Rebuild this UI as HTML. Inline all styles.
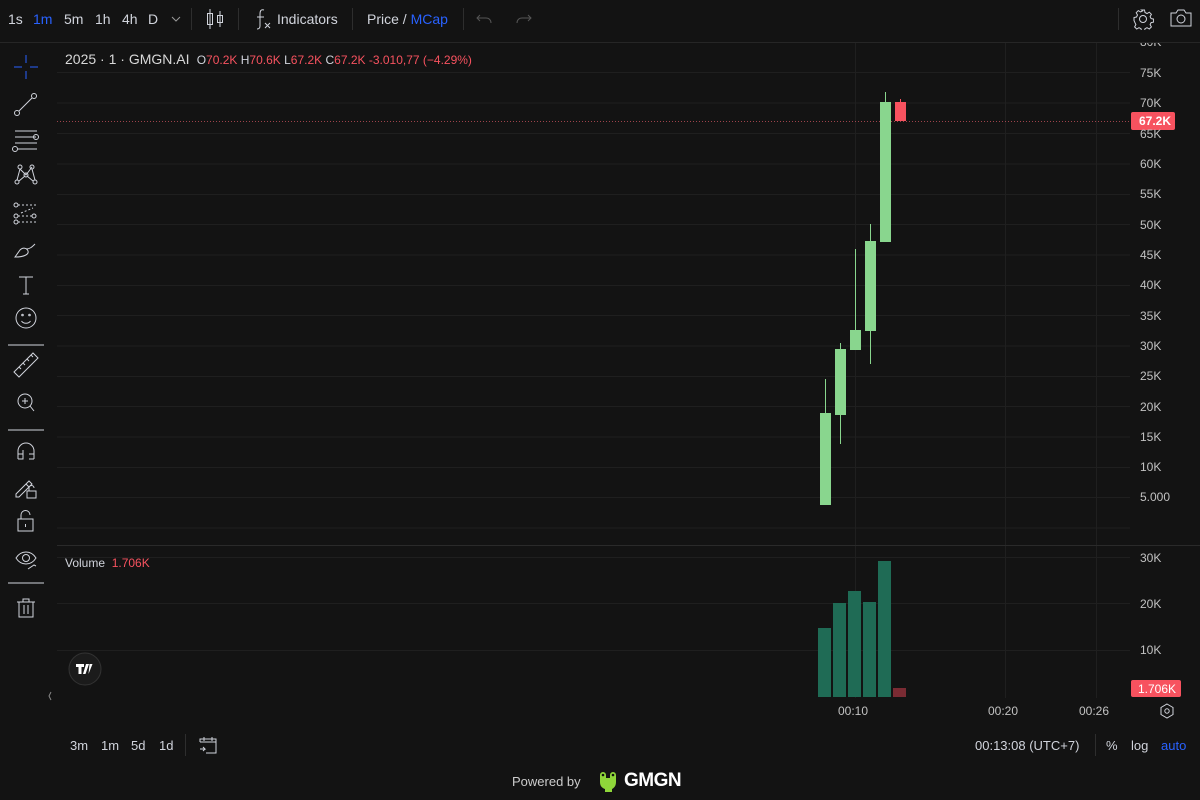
<!DOCTYPE html>
<html><head><meta charset="utf-8"><style>
*{margin:0;padding:0;box-sizing:border-box}
body{width:1200px;height:800px;background:#131313;font-family:"Liberation Sans",sans-serif;color:#d1d4dc;position:relative;overflow:hidden}
.t{position:absolute;font-size:13px;white-space:nowrap}
.sep{position:absolute;background:#2e2e2e}
svg{position:absolute}
</style></head><body>
<!-- top bar -->
<div class="t" style="left:8px;top:11px;font-size:14px">1s</div>
<div class="t" style="left:33px;top:11px;color:#2962ff;font-size:14px">1m</div>
<div class="t" style="left:64px;top:11px;font-size:14px">5m</div>
<div class="t" style="left:95px;top:11px;font-size:14px">1h</div>
<div class="t" style="left:122px;top:11px;font-size:14px">4h</div>
<div class="t" style="left:148px;top:11px;font-size:14px">D</div>
<svg style="left:170px;top:14px" width="12" height="10"><path d="M2 3l4 4 4-4" stroke="#999" fill="none"/></svg>
<div class="sep" style="left:191px;top:8px;width:1px;height:22px"></div>
<svg style="left:205px;top:8px" width="20" height="22" stroke="#d1d4dc" fill="none"><path d="M5 1v20M15 3v16"/><rect x="2.5" y="5.5" width="5" height="11"/><rect x="12.5" y="7.5" width="5" height="7"/></svg>
<div class="sep" style="left:238px;top:8px;width:1px;height:22px"></div>
<svg style="left:253px;top:7px" width="20" height="24" stroke="#d1d4dc" fill="none"><path d="M11 3c-3-1-4 1-4 4v12c0 2-1 3-3 3M4 10h7M12 16l5 5M17 16l-5 5"/></svg>
<div class="t" style="left:277px;top:11px;font-size:14px">Indicators</div>
<div class="sep" style="left:352px;top:8px;width:1px;height:22px"></div>
<div class="t" style="left:367px;top:11px;font-size:14px">Price / <span style="color:#2962ff">MCap</span></div>
<div class="sep" style="left:463px;top:8px;width:1px;height:22px"></div>
<svg style="left:476px;top:11px" width="60" height="16" stroke="#555" fill="none"><path d="M4 4l-3 3 3 3M1 7h9c3 0 5 2 5 5"/><path d="M52 4l3 3-3 3M55 7h-9c-3 0-5 2-5 5"/></svg>
<div class="sep" style="left:1118px;top:8px;width:1px;height:22px"></div>
<svg style="left:1132px;top:8px" width="22" height="22" stroke="#d1d4dc" fill="none"><circle cx="11" cy="11" r="3.5"/><path d="M9.5 2h3l.5 2.5 2 1 2.3-1.3 2.1 2.1-1.3 2.3 1 2 2.5.5v3l-2.5.5-1 2 1.3 2.3-2.1 2.1-2.3-1.3-2 1-.5 2.5h-3l-.5-2.5-2-1-2.3 1.3-2.1-2.1 1.3-2.3-1-2L2 12.5v-3l2.5-.5 1-2-1.3-2.3 2.1-2.1 2.3 1.3 2-1z"/></svg>
<svg style="left:1169px;top:8px" width="24" height="20" stroke="#d1d4dc" fill="none"><path d="M2 5h5l2-3h6l2 3h5v13H2z"/><circle cx="12" cy="11" r="4"/></svg>
<div class="sep" style="left:0;top:42px;width:1200px;height:1px;background:#262626"></div>
<!-- left toolbar -->
<svg style="left:0;top:43px" width="56" height="580" stroke="#d1d4dc" fill="none" stroke-width="1">
<path d="M26 12v8M26 28v8M14 24h8M30 24h8" stroke="#2962ff"/>
<circle cx="17" cy="70" r="2.5"/><circle cx="34" cy="53" r="2.5"/><path d="M19 68l13-13"/>
<path d="M15 88h22M15 94h21M15 100h22M18 106h19"/><circle cx="36" cy="94" r="2.5"/><circle cx="15" cy="106" r="2.5"/>
<circle cx="20" cy="124" r="2"/><circle cx="32" cy="124" r="2"/><circle cx="17" cy="139" r="2"/><circle cx="35" cy="139" r="2"/><circle cx="26" cy="132" r="2"/><path d="M20 126l6 6 6-8M17 137l3-11M35 137l-3-11M19 138l6-5M33 138l-6-5"/>
<circle cx="16" cy="162" r="2"/><circle cx="16" cy="173" r="2"/><circle cx="16" cy="179" r="2"/><circle cx="34" cy="173" r="2"/><path d="M18 162h18M18 173h14M18 179h18M21 170l12-5" stroke-dasharray="2 2"/>
<path d="M15 214l5-7c3-3 7-2 8 1s-3 6-13 6zM26 206c4 0 6-2 9-5"/>
<path d="M19 234h14M26 234v17M23 251h6"/>
<circle cx="26" cy="275" r="10"/><circle cx="22.5" cy="272" r=".8"/><circle cx="29.5" cy="272" r=".8"/><path d="M21.5 278c2 3 7 3 9 0"/>
<path d="M8 302h36"/>
<path d="M14 329l19-19 5 5-19 19zM19 324l2 2M23 320l2 2M27 316l2 2M31 312l2 2"/>
<circle cx="25" cy="358" r="7"/><path d="M30 363l4 5M22 358h6M25 355v6"/>
<path d="M8 387h36"/>
<path d="M18 416v-8a8 8 0 0 1 16 0v8M18 411h5M29 411h5M18 416h5v-9M29 416h5"/>
<path d="M16 451l13-13 3 3-13 13h-3zM26 441l3 3"/><rect x="27" y="448" width="9" height="7"/><path d="M29 448v-3a2.5 2.5 0 0 1 5 0"/>
<rect x="18" y="476" width="15" height="12"/><path d="M21 476v-4a4.5 4.5 0 0 1 9 0"/><path d="M25.5 481v3"/>
<path d="M16 515c5-8 15-8 20 0-5 8-15 8-20 0z"/><circle cx="26" cy="515" r="3.5"/><path d="M28 526l6-4 2 1"/>
<path d="M8 540h36"/>
<path d="M17 559h18M23 559v-3h6v3M19 559v15h14v-15M24 562v9M28 562v9"/>
</svg>
<!-- chart -->
<svg style="left:0;top:0" width="1200" height="800">
<g stroke="#1f1f1f" stroke-width="1">
<path d="M57 72.5H1130M57 103H1130M57 133.5H1130M57 164H1130M57 194.5H1130M57 224.5H1130M57 255H1130M57 285.5H1130M57 315.5H1130M57 346H1130M57 376.5H1130M57 406.5H1130M57 437H1130M57 467.5H1130M57 497.5H1130M57 528H1130"/>
<path d="M855.5 43V698M1005.5 43V698M1096.5 43V698"/>
<path d="M57 557.5H1130M57 603.5H1130M57 650.5H1130"/>
</g>
<path d="M57 545.5H1200" stroke="#2a2a2a"/>
<path d="M57 121.5H1130" stroke="#c0505a" stroke-dasharray="1 2" opacity=".8"/>
<g fill="#89d68e" stroke="#89d68e">
<path d="M825.5 379V413M840.5 343V349M840.5 415V444M855.5 249V330M870.5 224V241M870.5 331V364M885.5 92V102" fill="none"/>
<rect x="820" y="413" width="11" height="92" stroke="none"/>
<rect x="835" y="349" width="11" height="66" stroke="none"/>
<rect x="850" y="330" width="11" height="20" stroke="none"/>
<rect x="865" y="241" width="11" height="90" stroke="none"/>
<rect x="880" y="102" width="11" height="140" stroke="none"/>
</g>
<path d="M900.5 99V102" stroke="#f7525f"/>
<rect x="895" y="102" width="11" height="19" fill="#f7525f"/>
<g fill="#1f6b55">
<rect x="818" y="628" width="13" height="69"/><rect x="833" y="603" width="13" height="94"/><rect x="848" y="591" width="13" height="106"/><rect x="863" y="602" width="13" height="95"/><rect x="878" y="561" width="13" height="136"/>
</g>
<rect x="893" y="688" width="13" height="9" fill="#7a2b33"/>
<rect x="1131" y="112" width="44" height="18" fill="#f7525f" rx="2"/>
<rect x="1131" y="680" width="50" height="17" fill="#f7525f" rx="2"/>
<g font-family="Liberation Sans" font-size="12" fill="#c2c2c2">
<text x="1140" y="46">80K</text><text x="1140" y="77">75K</text><text x="1140" y="107">70K</text><text x="1140" y="138">65K</text><text x="1140" y="168">60K</text><text x="1140" y="198">55K</text><text x="1140" y="229">50K</text><text x="1140" y="259">45K</text><text x="1140" y="289">40K</text><text x="1140" y="320">35K</text><text x="1140" y="350">30K</text><text x="1140" y="380">25K</text><text x="1140" y="411">20K</text><text x="1140" y="441">15K</text><text x="1140" y="471">10K</text><text x="1140" y="501">5.000</text>
<text x="1140" y="562">30K</text><text x="1140" y="608">20K</text><text x="1140" y="654">10K</text>
<text x="838" y="715">00:10</text><text x="988" y="715">00:20</text><text x="1079" y="715">00:26</text>
</g>
<rect x="1131" y="36" width="69" height="7" fill="#131313"/>
<path d="M1131 42.5H1200" stroke="#262626"/>
<text x="1139" y="125" font-family="Liberation Sans" font-size="12" font-weight="bold" fill="#fff">67.2K</text>
<text x="1138" y="693" font-family="Liberation Sans" font-size="12" fill="#fff">1.706K</text>
<g stroke="#d1d4dc" fill="none"><path d="M1167 704l6 3.5v7l-6 3.5-6-3.5v-7z"/><circle cx="1167" cy="711" r="2.2"/></g>
<circle cx="85" cy="669" r="16" fill="#1b1b1b" stroke="#333"/>
<path d="M76 664h8v3h-2.5v7h-3v-7H76zM86 664h3l-3.5 10h-2.5z M89.5 664h3l-4 10" fill="#fff"/>
<path d="M51 692l-2 4 2 4" stroke="#888" fill="none"/>
</svg>
<div class="t" style="left:65px;top:51px;font-size:14px;color:#d8d8d8">2025 · 1 · GMGN.AI <span style="font-size:12px;color:#d1d4dc">&nbsp;O<span style="color:#f7525f">70.2K</span> H<span style="color:#f7525f">70.6K</span> L<span style="color:#f7525f">67.2K</span> C<span style="color:#f7525f">67.2K</span> <span style="color:#f7525f">-3.010,77 (−4.29%)</span></span></div>
<div class="t" style="left:65px;top:556px;font-size:12px">Volume <span style="color:#f7525f">&nbsp;1.706K</span></div>
<!-- bottom bar -->
<div class="t" style="left:70px;top:738px">3m</div>
<div class="t" style="left:101px;top:738px">1m</div>
<div class="t" style="left:131px;top:738px">5d</div>
<div class="t" style="left:159px;top:738px">1d</div>
<div class="sep" style="left:185px;top:734px;width:1px;height:22px"></div>
<svg style="left:197px;top:735px" width="22" height="20" stroke="#d1d4dc" fill="none"><path d="M3 7V4h16v14H9M3 7h16M7 2v4M15 2v4M3 14h5l-2-2M8 14l-2 2"/></svg>
<div class="t" style="left:975px;top:738px">00:13:08 (UTC+7)</div>
<div class="sep" style="left:1095px;top:734px;width:1px;height:22px"></div>
<div class="t" style="left:1106px;top:738px">%</div>
<div class="t" style="left:1131px;top:738px">log</div>
<div class="t" style="left:1161px;top:738px;color:#2962ff">auto</div>
<div class="t" style="left:512px;top:774px;font-size:13px;color:#ccc">Powered by</div>
<svg style="left:596px;top:769px" width="26" height="24"><path d="M4 6a3 3 0 0 1 6 0v3h4V6a3 3 0 0 1 6 0v7c0 4-2 6-4 7v3H9v-3c-3-1-5-3-5-7z" fill="#8fd63a"/><circle cx="7" cy="6" r="1.3" fill="#111"/><circle cx="17" cy="6" r="1.3" fill="#111"/></svg>
<div class="t" style="left:624px;top:770px;font-size:19px;font-weight:bold;color:#fff;letter-spacing:-0.5px">GMGN</div>
</body></html>
